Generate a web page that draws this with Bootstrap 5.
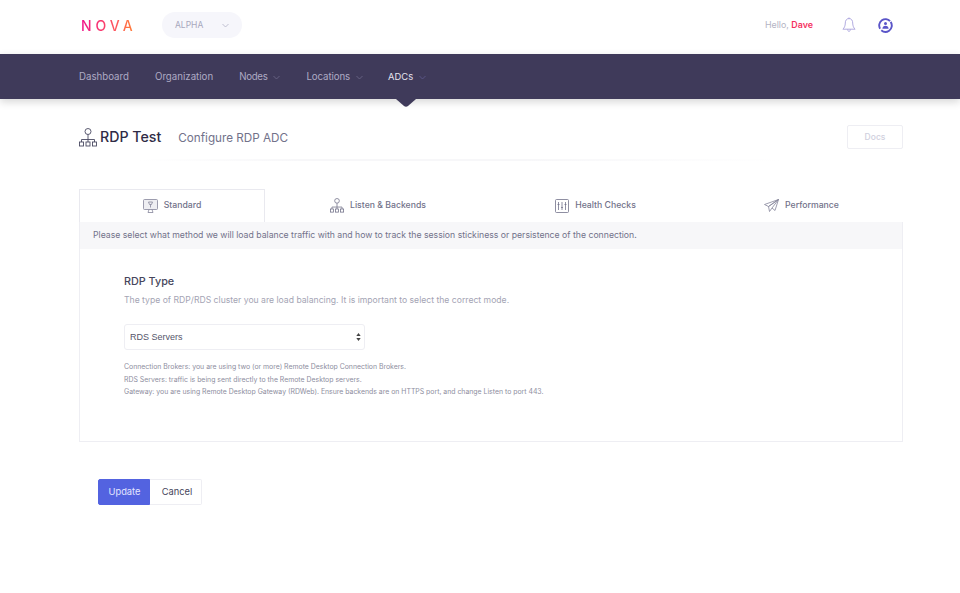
<!DOCTYPE html>
<html lang="en">
<head>
<meta charset="UTF-8">
<meta name="viewport" content="width=device-width, initial-scale=1.0">
<title>RDP Test</title>
<link href="https://cdn.jsdelivr.net/npm/bootstrap@5.3.3/dist/css/bootstrap.min.css" rel="stylesheet">
<style>
body { font-family: Inter, "Open Sans", sans-serif; background: #fff; color: #3f3a5a; font-size: 10px; }
.top-strip { height: 54px; padding: 0 67px 4px 81px; }
.brand-word { font-size: 14px; font-weight: 500; letter-spacing: 4px; width: 81px; background: linear-gradient(90deg, #f0148c, #ff5a5a 45%, #ff9a1e 80%); -webkit-background-clip: text; background-clip: text; color: transparent; }
.env-pill { width: 80px; height: 26px; background: #f6f6fb; border-radius: 13px; color: #a8a8bd; font-size: 8.5px; padding: 0 13px; }
.hello-text { font-size: 8.9px; color: #b4b4c4; margin-right: 29px; }
.hello-text b { color: #f5325f; font-weight: 600; }
.bell-icon { margin-right: 22px; }
.main-nav { height: 45px; background: #3f3a5a; padding: 2px 79px 0; gap: 26px; position: relative; box-shadow: 0 3px 8px rgba(0,0,0,.16); }
.main-nav a { color: #aeaac4; font-size: 9.7px; text-decoration: none; display: flex; align-items: center; gap: 6px; }
.main-nav a.on { color: #e6e4f0; font-size: 9.4px; margin-left: -1px; }
.main-nav a.tight-a { letter-spacing: -.3px; }
.main-nav a.tight-b { letter-spacing: -.1px; }
.nav-pointer { position: absolute; left: 396px; top: 45px; }
.page-wrap { padding: 0 57px 0 79px; }
.title-row { height: 62px; padding-top: 14px; margin-bottom: 28px; position: relative; }
.title-row h1 { font-size: 14.2px; font-weight: 500; color: #2f2b46; margin: 0 0 0 3px; }
.title-row h2 { font-size: 11.7px; font-weight: 400; color: #72728a; margin: 2px 0 0 17px; }
.docs-link { margin-left: auto; width: 56px; height: 24px; border: 1px solid #eeeef3; border-radius: 2px; color: #d0d0de; font-size: 8.5px; font-weight: 500; background: #fff; }
.title-fade { position: absolute; left: 60px; right: 120px; bottom: 0; height: 2px; background: linear-gradient(90deg, #fff, #f7f7f9 25%, #f7f7f9 60%, #fff); }
.tab-row { height: 33px; }
.tab-cell { display: flex; align-items: center; justify-content: center; gap: 6px; color: #72728a; font-size: 8.7px; font-weight: 500; }
.tab-cell.on { width: 186px; flex: none; border: 1px solid #e9e9ef; border-bottom: 0; background: #fff; }
.tab-cell.w1 { width: 226px; flex: none; }
.tab-cell.w2 { width: 209px; flex: none; }
.tab-cell.w3 { width: 203px; flex: none; }
.tab-panel { border: 1px solid #eeeef3; border-top: 0; height: 220px; }
.panel-note { height: 27px; background: #f7f7f9; color: #72728a; font-size: 8.7px; padding: 0 13px; display: flex; align-items: center; }
.panel-body { padding: 26px 44px 0; }
.panel-body h3 { font-size: 10.8px; font-weight: 500; color: #46465c; margin: 0 0 5px; line-height: 14px; }
.panel-sub { color: #a4a4b4; font-size: 8.65px; margin: 0 0 18px; line-height: 12px; }
.rdp-select { width: 241px; height: 26px; border: 1px solid #eeeef3; border-radius: 3px; font-family: "Liberation Sans", Arial, sans-serif; font-size: 9px; color: #55556a; padding: 1px 5px 0; box-shadow: none; appearance: none; -webkit-appearance: none; background: #fff url("data:image/svg+xml,%3Csvg xmlns='http://www.w3.org/2000/svg' width='5' height='8'%3E%3Cpath d='M2.500 0l2.200 3H.3zM2.500 8L.3 5h4.400z' fill='%23444'/%3E%3C/svg%3E") no-repeat right 3px center; }
.help-lines { margin-top: 11px; color: #8e8ea0; font-size: 6.9px; line-height: 12.5px; }
.action-row { padding: 37px 0 0 19px; }
.act-btn { height: 26px; width: 52px; font-size: 9.3px; padding: 0; border-radius: 2px 0 0 2px; }
.act-update { background: #5363e0; border: 1px solid #5363e0; color: #e4e7ff; padding-left: 1px; }
.act-update:hover { background: #5363e0; border-color: #5363e0; color: #e4e7ff; }
.act-cancel { background: #fff; border: 1px solid #eeeef3; color: #46465c; border-radius: 0 2px 2px 0; border-left: 0; padding-left: 3px; }
</style>
</head>
<body>
  <div class="top-strip d-flex align-items-center">
    <div class="brand-word">NOVA</div>
    <div class="env-pill d-flex align-items-center justify-content-between">
      <span>ALPHA</span>
      <svg width="7" height="5" viewBox="0 0 7 5" fill="none" stroke="#b4b4c8" stroke-width=".8"><path d="M.5 1l3 3 3-3"/></svg>
    </div>
    <div class="ms-auto d-flex align-items-center">
      <span class="hello-text">Hello, <b>Dave</b></span>
      <svg class="bell-icon" width="14" height="16" viewBox="0 0 14 16" fill="none" stroke="#a9a3dc" stroke-width=".9"><path d="M7 1.600c-2.600 0-3.700 2-3.700 4.400 0 3-1.100 5-2.400 6.200h12.200c-1.300-1.200-2.400-3.200-2.400-6.200 0-2.400-1.100-4.400-3.700-4.400zM5.600 12.400c.1 1.200.7 2 1.400 2s1.300-.8 1.400-2M6.200 1.600c0-1 1.600-1 1.600 0"/></svg>
      <svg width="15" height="15" viewBox="0 0 15 15" fill="none" stroke="#5a55c8" stroke-width="1.900"><circle cx="7.500" cy="7.500" r="6.300" stroke-dasharray="17.800 2" transform="rotate(-35 7.500 7.500)"/><circle cx="7.500" cy="5.400" r="1.500" fill="#5a55c8" stroke="none"/><path d="M4.400 10.800c0-2 1.400-3 3.100-3s3.100 1 3.100 3z" fill="#5a55c8" stroke="none"/></svg>
    </div>
  </div>

  <nav class="main-nav d-flex align-items-center">
    <a href="#">Dashboard</a>
    <a href="#">Organization</a>
    <a href="#" class="tight-a">Nodes <svg width="7" height="5" viewBox="0 0 7 5" fill="none" stroke="#6f6a8c" stroke-width=".8"><path d="M.5 1l3 3 3-3"/></svg></a>
    <a href="#" class="tight-b">Locations <svg width="7" height="5" viewBox="0 0 7 5" fill="none" stroke="#6f6a8c" stroke-width=".8"><path d="M.5 1l3 3 3-3"/></svg></a>
    <a href="#" class="on">ADCs <svg width="7" height="5" viewBox="0 0 7 5" fill="none" stroke="#5f5a90" stroke-width=".8"><path d="M.5 1l3 3 3-3"/></svg></a>
    <svg class="nav-pointer" width="20" height="8" viewBox="0 0 20 8"><path d="M0 0h20l-8 7q-2 1.300-4 0z" fill="#3f3a5a"/></svg>
  </nav>

  <div class="page-wrap">
    <div class="title-row d-flex align-items-center">
      <svg width="18" height="19" viewBox="0 0 18 19" fill="none" stroke="#4a4a62" stroke-width=".9"><circle cx="9" cy="3.500" r="3"/><path d="M9 6.500v5M2.500 14v-2.500h13V14M9 11.500V14"/><rect x=".5" y="14" width="4" height="4"/><rect x="7" y="14" width="4" height="4"/><rect x="13.500" y="14" width="4" height="4"/></svg>
      <h1>RDP Test</h1>
      <h2>Configure RDP ADC</h2>
      <a class="docs-link d-flex align-items-center justify-content-center text-decoration-none" href="#">Docs</a>
      <div class="title-fade"></div>
    </div>

    <div class="tab-row d-flex">
      <div class="tab-cell on">
        <svg width="15" height="14" viewBox="0 0 15 14" fill="none" stroke="#85859a" stroke-width=".8"><rect x=".5" y=".5" width="14" height="10" rx="1" fill="#eeeef2"/><path d="M5 13.500h5M6 10.500l-1 3M9 10.500l1 3M5.500 3h4l-1 2.500h-2zM7.500 5.500v3"/></svg>
        Standard
      </div>
      <div class="tab-cell w1">
        <svg width="14" height="15" viewBox="0 0 18 19" fill="none" stroke="#72728a" stroke-width="1"><circle cx="9" cy="3.500" r="3"/><path d="M9 6.500v5M2.500 14v-2.500h13V14M9 11.500V14"/><rect x=".5" y="14" width="4" height="4"/><rect x="7" y="14" width="4" height="4"/><rect x="13.500" y="14" width="4" height="4"/></svg>
        Listen &amp; Backends
      </div>
      <div class="tab-cell w2">
        <svg width="14" height="14" viewBox="0 0 14 14" fill="none" stroke="#72728a" stroke-width=".8"><rect x=".5" y=".5" width="13" height="13" rx="1"/><path d="M3.500 3v8M7 3v8M10.500 3v8M2.500 5.500h2M6 8.500h2M9.500 5.500h2"/></svg>
        Health Checks
      </div>
      <div class="tab-cell w3">
        <svg width="15" height="13" viewBox="0 0 15 13" fill="none" stroke="#85859a" stroke-width=".8"><path d="M14.500.5L.5 5.500l4 2zM14.500.5L4.500 7.500l1 5 2.500-3.500zM14.500.5L11 11.500 8 9"/></svg>
        Performance
      </div>
    </div>

    <div class="tab-panel">
      <div class="panel-note">Please select what method we will load balance traffic with and how to track the session stickiness or persistence of the connection.</div>
      <div class="panel-body">
        <h3>RDP Type</h3>
        <p class="panel-sub">The type of RDP/RDS cluster you are load balancing. It is important to select the correct mode.</p>
        <select class="rdp-select d-block">
          <option>RDS Servers</option>
          <option>Connection Brokers</option>
          <option>Gateway</option>
        </select>
        <div class="help-lines">
          Connection Brokers: you are using two (or more) Remote Desktop Connection Brokers.<br>
          RDS Servers: traffic is being sent directly to the Remote Desktop servers.<br>
          Gateway: you are using Remote Desktop Gateway (RDWeb). Ensure backends are on HTTPS port, and change Listen to port 443.
        </div>
      </div>
    </div>

    <div class="action-row d-flex">
      <button type="button" class="btn act-btn act-update">Update</button>
      <button type="button" class="btn act-btn act-cancel">Cancel</button>
    </div>
  </div>
  <script src="https://cdn.jsdelivr.net/npm/bootstrap@5.3.3/dist/js/bootstrap.bundle.min.js"></script>
</body>
</html>
